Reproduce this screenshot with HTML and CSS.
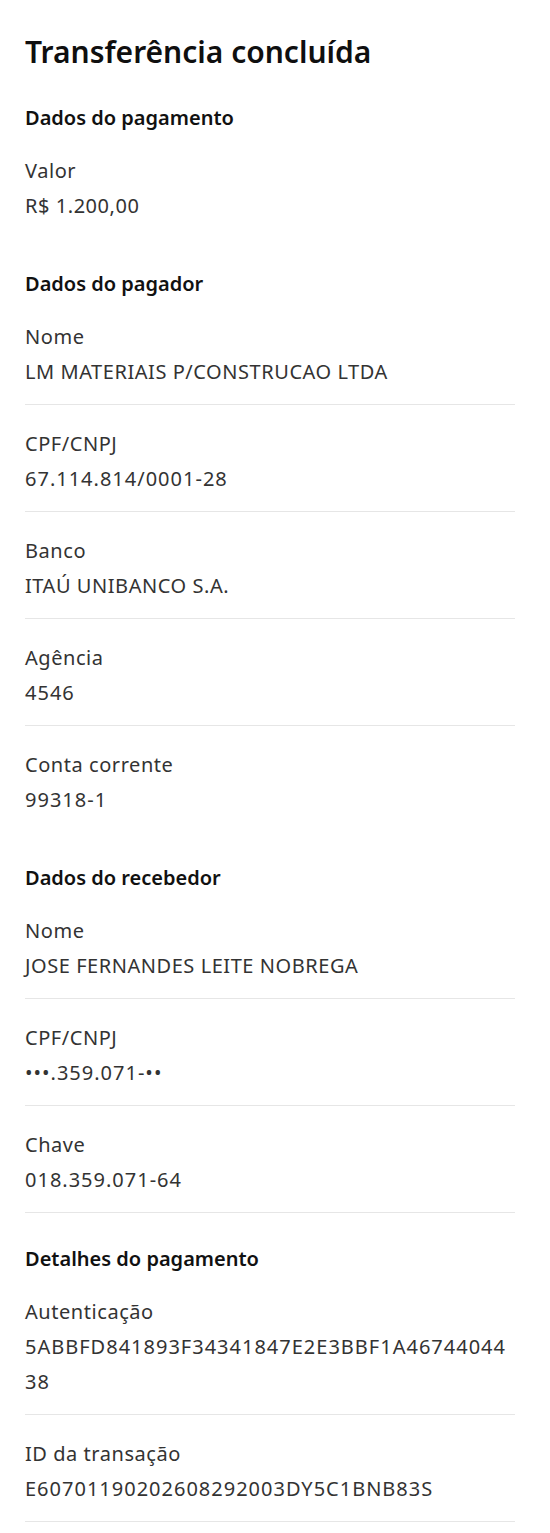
FILE: index.html
```html
<!DOCTYPE html>
<html lang="pt-BR">
<head>
<meta charset="utf-8">
<title>Transferência concluída</title>
<link rel="stylesheet" href="styles.css">
</head>
<body>
<main class="page">
  <h1 class="title">Transferência concluída</h1>

  <section class="section">
    <h2 class="section-title">Dados do pagamento</h2>
    <div class="item last">
      <div class="label">Valor</div>
      <div class="value">R$ 1.200,00</div>
    </div>
  </section>

  <section class="section">
    <h2 class="section-title">Dados do pagador</h2>
    <div class="item">
      <div class="label">Nome</div>
      <div class="value">LM MATERIAIS P/CONSTRUCAO LTDA</div>
    </div>
    <div class="item">
      <div class="label">CPF/CNPJ</div>
      <div class="value num">67.114.814/0001-28</div>
    </div>
    <div class="item">
      <div class="label">Banco</div>
      <div class="value">ITAÚ UNIBANCO S.A.</div>
    </div>
    <div class="item">
      <div class="label">Agência</div>
      <div class="value num">4546</div>
    </div>
    <div class="item last">
      <div class="label">Conta corrente</div>
      <div class="value num">99318-1</div>
    </div>
  </section>

  <section class="section">
    <h2 class="section-title">Dados do recebedor</h2>
    <div class="item">
      <div class="label">Nome</div>
      <div class="value">JOSE FERNANDES LEITE NOBREGA</div>
    </div>
    <div class="item">
      <div class="label">CPF/CNPJ</div>
      <div class="value num">•••.359.071-••</div>
    </div>
    <div class="item">
      <div class="label">Chave</div>
      <div class="value num">018.359.071-64</div>
    </div>
  </section>

  <section class="section">
    <h2 class="section-title">Detalhes do pagamento</h2>
    <div class="item">
      <div class="label">Autenticação</div>
      <div class="value num wrap">5ABBFD841893F34341847E2E3BBF1A4674404438</div>
    </div>
    <div class="item">
      <div class="label">ID da transação</div>
      <div class="value num">E60701190202608292003DY5C1BNB83S</div>
    </div>
  </section>
</main>
</body>
</html>
```

FILE: styles.css
```css
html, body {
  margin: 0;
  padding: 0;
  background: #ffffff;
}

body {
  font-family: "Noto Sans", "Open Sans", "Liberation Sans", sans-serif;
  color: #2b2b2b;
}

.page {
  padding: 32px 35px 0 25px;
}

.title {
  margin: 0;
  font-size: 30px;
  line-height: 40px;
  font-weight: 600;
  color: #0f0f0f;
  letter-spacing: 0;
}

.section {
  margin-top: 31px;
}

.section-title {
  margin: 0;
  font-size: 20px;
  line-height: 29px;
  font-weight: 600;
  color: #111111;
  letter-spacing: 0;
}

.item {
  padding: 21px 0 15px 0;
  border-bottom: 1px solid #e6e6e6;
}

.item.last {
  border-bottom: none;
}

.label,
.value {
  font-size: 20px;
  line-height: 35px;
  color: #333333;
  letter-spacing: 0.55px;
}

.value.num {
  letter-spacing: 1px;
}

.wrap {
  word-break: break-all;
}
```
